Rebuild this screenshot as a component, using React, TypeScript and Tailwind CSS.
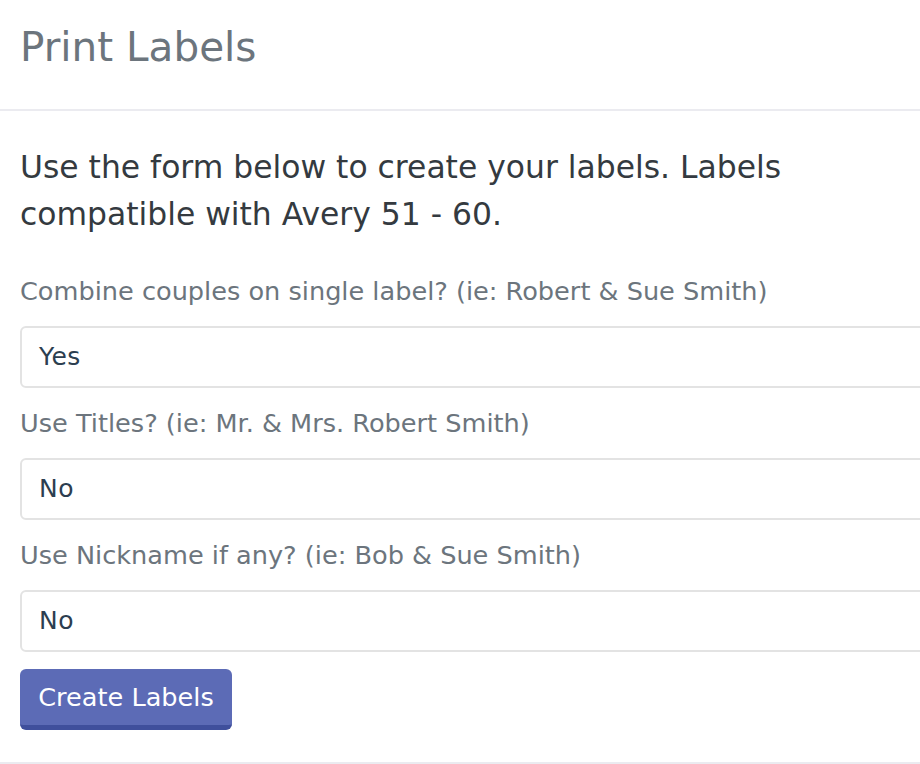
import React from "react";

const font = { fontFamily: '"DejaVu Sans", "Liberation Sans", sans-serif' };

const fields = [
  { label: "Combine couples on single label? (ie: Robert & Sue Smith)", value: "Yes" },
  { label: "Use Titles? (ie: Mr. & Mrs. Robert Smith)", value: "No" },
  { label: "Use Nickname if any? (ie: Bob & Sue Smith)", value: "No" },
];

export default function App() {
  return (
    <div className="h-[764px] w-[920px] overflow-hidden bg-white" style={font}>
      <div className="h-[111px] border-b-2 border-[#ebebf0] px-5 pt-[21px]">
        <h1 className="text-[40.5px] leading-[52px] text-[#6c757d]">Print Labels</h1>
      </div>
      <div className="border-b-2 border-[#ebebf0] px-5 pb-[32px] pt-[33px]">
        <p className="w-[880px] text-[31.4px] leading-[47px] text-[#343a40]">
          Use the form below to create your labels. Labels
          <br />
          compatible with Avery 51 - 60.
        </p>
        <form className="mt-[35px]">
          {fields.map((f) => (
            <div key={f.label} className="mb-[17px]">
              <label className="block whitespace-nowrap text-[25.6px] leading-[36px] text-[#6c757d]">
                {f.label}
              </label>
              <div className="mt-[17px] flex h-[62px] w-[1000px] items-center rounded-md border-2 border-[#e3e3e3] px-[17px] text-[25px] tracking-[0.5px] text-[#2c3e50]">
                {f.value}
              </div>
            </div>
          ))}
          <button
            type="button"
            className="flex h-[61px] w-[212px] items-center justify-center rounded-md border-b-[5px] border-[#3f4f9c] bg-[#5c6bb6] text-[25.6px] text-white"
          >
            Create Labels
          </button>
        </form>
      </div>
    </div>
  );
}
